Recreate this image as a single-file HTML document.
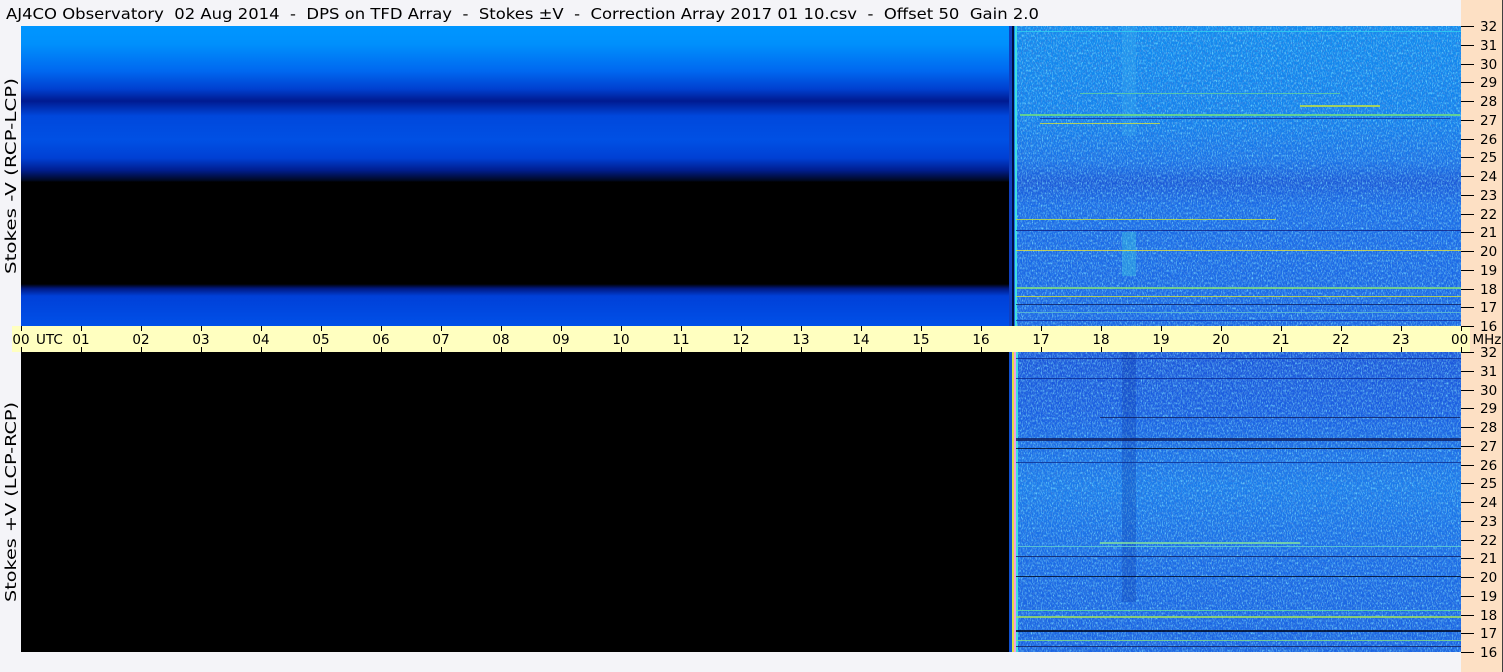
<!DOCTYPE html>
<html><head><meta charset="utf-8"><style>
html,body{margin:0;padding:0;background:#f4f4f8;}
svg{display:block;}
text{font-family:"DejaVu Sans","Liberation Sans",sans-serif;fill:#000;}
</style></head><body>
<svg width="1503" height="672" viewBox="0 0 1503 672" xmlns="http://www.w3.org/2000/svg">
<defs>
<linearGradient id="lt" x1="0" y1="26" x2="0" y2="326" gradientUnits="userSpaceOnUse">
<stop offset="0" stop-color="#0096ff"/>
<stop offset="0.06" stop-color="#0090fc"/>
<stop offset="0.15" stop-color="#0068f0"/>
<stop offset="0.21" stop-color="#0040d0"/>
<stop offset="0.25" stop-color="#001a90"/>
<stop offset="0.30" stop-color="#0048dc"/>
<stop offset="0.38" stop-color="#0050e4"/>
<stop offset="0.44" stop-color="#0040d4"/>
<stop offset="0.48" stop-color="#001e90"/>
<stop offset="0.515" stop-color="#000820"/>
<stop offset="0.52" stop-color="#000"/>
<stop offset="0.86" stop-color="#000"/>
<stop offset="0.875" stop-color="#001880"/>
<stop offset="0.90" stop-color="#0040d8"/>
<stop offset="1" stop-color="#0050e8"/>
</linearGradient>
<linearGradient id="rt" x1="0" y1="26" x2="0" y2="326" gradientUnits="userSpaceOnUse">
<stop offset="0" stop-color="#108cf0"/>
<stop offset="0.3" stop-color="#1282ee"/>
<stop offset="0.45" stop-color="#1a72e8"/>
<stop offset="0.52" stop-color="#1a58d8"/>
<stop offset="0.6" stop-color="#1a6ce8"/>
<stop offset="1" stop-color="#1a66e6"/>
</linearGradient>
<linearGradient id="rb" x1="0" y1="352" x2="0" y2="652" gradientUnits="userSpaceOnUse">
<stop offset="0" stop-color="#1c56da"/>
<stop offset="0.2" stop-color="#1a5ee2"/>
<stop offset="0.45" stop-color="#1a7cec"/>
<stop offset="0.7" stop-color="#1a6ae6"/>
<stop offset="1" stop-color="#1a62e2"/>
</linearGradient>
<filter id="nz" x="0" y="0" width="100%" height="100%">
<feTurbulence type="fractalNoise" baseFrequency="0.8 0.4" numOctaves="2" seed="3"/>
<feColorMatrix values="0 0 0 0 0.2  0 0 0 0 0.75  0 0 0 0 1  0 0 0 2.2 -1.0"/>
</filter>
<filter id="nz2" x="0" y="0" width="100%" height="100%">
<feTurbulence type="fractalNoise" baseFrequency="0.8 0.4" numOctaves="2" seed="9"/>
<feColorMatrix values="0 0 0 0 0.05  0 0 0 0 0.2  0 0 0 0 0.7  0 0 0 2.2 -1.0"/>
</filter>
</defs>
<text x="6" y="19" font-size="15.5" textLength="1033" lengthAdjust="spacingAndGlyphs" xml:space="preserve">AJ4CO Observatory  02 Aug 2014  -  DPS on TFD Array  -  Stokes ±V  -  Correction Array 2017 01 10.csv  -  Offset 50  Gain 2.0</text>
<!-- top plot -->
<rect x="21" y="26" width="988" height="300" fill="url(#lt)"/>
<rect x="1009" y="26" width="452" height="300" fill="url(#rt)"/>
<rect x="1016" y="26" width="445" height="300" filter="url(#nz)"/>
<rect x="1016" y="26" width="445" height="300" filter="url(#nz2)"/>
<rect x="1009" y="26" width="3" height="300" fill="#1040c0"/>
<rect x="1012" y="26" width="2" height="300" fill="#001040"/>
<rect x="1015" y="26" width="2" height="300" fill="#40e0e0"/>
<rect x="1122" y="26" width="14" height="110" fill="#40b0f0" opacity="0.3"/>
<rect x="1122" y="232" width="14" height="44" fill="#40d0e0" opacity="0.35"/>
<g opacity="0.8">
<rect x="1016" y="31" width="445" height="1" fill="#30d0f0"/>
<rect x="1020" y="114" width="440" height="2" fill="#70e080"/>
<rect x="1040" y="118" width="410" height="1" fill="#1030a0"/>
<rect x="1040" y="123" width="120" height="1" fill="#d0e040"/>
<rect x="1080" y="93" width="260" height="1" fill="#60d0a0"/>
<rect x="1300" y="105" width="80" height="2" fill="#c0e040"/>
<rect x="1016" y="219" width="260" height="1" fill="#c0e040"/>
<rect x="1016" y="230" width="445" height="1" fill="#102080"/>
<rect x="1016" y="250" width="445" height="1" fill="#e0e040"/>
<rect x="1016" y="287" width="445" height="2" fill="#80e080"/>
<rect x="1016" y="296" width="445" height="1" fill="#d0e040"/>
<rect x="1016" y="304" width="445" height="1" fill="#102060"/>
<rect x="1016" y="312" width="445" height="1" fill="#60c0d0"/>
<rect x="1016" y="320" width="445" height="1" fill="#1030a0"/>
</g>
<!-- time axis -->
<rect x="12" y="326" width="1458" height="26" fill="#ffffc0"/>
<g stroke="#000" stroke-width="1">
<path d="M21.5 326v5M21.5 347v5M81.5 326v5M81.5 347v5M141.5 326v5M141.5 347v5M201.5 326v5M201.5 347v5M261.5 326v5M261.5 347v5M321.5 326v5M321.5 347v5M381.5 326v5M381.5 347v5M441.5 326v5M441.5 347v5M501.5 326v5M501.5 347v5M561.5 326v5M561.5 347v5M621.5 326v5M621.5 347v5M681.5 326v5M681.5 347v5M741.5 326v5M741.5 347v5M801.5 326v5M801.5 347v5M861.5 326v5M861.5 347v5M921.5 326v5M921.5 347v5M981.5 326v5M981.5 347v5M1041.5 326v5M1041.5 347v5M1101.5 326v5M1101.5 347v5M1161.5 326v5M1161.5 347v5M1221.5 326v5M1221.5 347v5M1281.5 326v5M1281.5 347v5M1341.5 326v5M1341.5 347v5M1401.5 326v5M1401.5 347v5M1461.5 326v5M1461.5 347v5"/>
</g>
<g font-size="13.5" text-anchor="middle">
<text x="21" y="344">00</text><text x="81" y="344">01</text><text x="141" y="344">02</text><text x="201" y="344">03</text><text x="261" y="344">04</text><text x="321" y="344">05</text><text x="381" y="344">06</text><text x="441" y="344">07</text><text x="501" y="344">08</text><text x="561" y="344">09</text><text x="621" y="344">10</text><text x="681" y="344">11</text><text x="741" y="344">12</text><text x="801" y="344">13</text><text x="861" y="344">14</text><text x="921" y="344">15</text><text x="981" y="344">16</text><text x="1041" y="344">17</text><text x="1101" y="344">18</text><text x="1161" y="344">19</text><text x="1221" y="344">20</text><text x="1281" y="344">21</text><text x="1341" y="344">22</text><text x="1401" y="344">23</text>
</g>
<text x="36" y="344" font-size="13.5">UTC</text>
<!-- bottom plot -->
<rect x="21" y="352" width="988" height="300" fill="#000"/>
<rect x="1009" y="352" width="452" height="300" fill="url(#rb)"/>
<rect x="1016" y="352" width="445" height="300" filter="url(#nz)"/>
<rect x="1016" y="352" width="445" height="300" filter="url(#nz2)"/>
<rect x="1009" y="352" width="3" height="300" fill="#1050d0"/>
<rect x="1012" y="352" width="2" height="300" fill="#e0e040"/>
<rect x="1014" y="352" width="2" height="300" fill="#f0a0e0"/>
<rect x="1016" y="352" width="2" height="300" fill="#40e0e0"/>
<rect x="1122" y="352" width="14" height="250" fill="#0830a0" opacity="0.25"/>
<g opacity="0.8">
<rect x="1016" y="358" width="445" height="1" fill="#0a2a90"/>
<rect x="1016" y="378" width="445" height="1" fill="#0a2a90"/>
<rect x="1100" y="417" width="360" height="1" fill="#102060"/>
<rect x="1016" y="438" width="445" height="3" fill="#102060"/>
<rect x="1016" y="448" width="445" height="1" fill="#000820"/>
<rect x="1016" y="462" width="445" height="1" fill="#103090"/>
<rect x="1100" y="542" width="200" height="2" fill="#80e0a0"/>
<rect x="1016" y="546" width="445" height="1" fill="#60d0d0"/>
<rect x="1016" y="556" width="445" height="1" fill="#102060"/>
<rect x="1016" y="576" width="445" height="1" fill="#000820"/>
<rect x="1016" y="610" width="445" height="1" fill="#60e0a0"/>
<rect x="1016" y="616" width="445" height="2" fill="#a0e060"/>
<rect x="1016" y="630" width="445" height="2" fill="#000820"/>
<rect x="1016" y="640" width="445" height="1" fill="#80e080"/>
<rect x="1016" y="646" width="445" height="1" fill="#102060"/>
</g>
<!-- right scale -->
<rect x="1461" y="0" width="42" height="326" fill="#fde0c4"/>
<rect x="1470" y="326" width="33" height="26" fill="#fde0c4"/>
<rect x="1461" y="352" width="42" height="320" fill="#fde0c4"/>
<text x="1451" y="344" font-size="13.5">00 MHz</text>
<g stroke="#000" stroke-width="1">
<path d="M1461 26.5h13M1461 45.5h13M1461 64.5h13M1461 82.5h13M1461 101.5h13M1461 120.5h13M1461 139.5h13M1461 157.5h13M1461 176.5h13M1461 195.5h13M1461 214.5h13M1461 232.5h13M1461 251.5h13M1461 270.5h13M1461 289.5h13M1461 307.5h13M1461 326.5h13"/>
<path d="M1461 352.5h13M1461 371.5h13M1461 390.5h13M1461 408.5h13M1461 427.5h13M1461 446.5h13M1461 465.5h13M1461 483.5h13M1461 502.5h13M1461 521.5h13M1461 540.5h13M1461 558.5h13M1461 577.5h13M1461 596.5h13M1461 615.5h13M1461 633.5h13M1461 652.5h13"/>
</g>
<g font-size="13.5">
<text x="1480" y="31">32</text><text x="1480" y="50">31</text><text x="1480" y="69">30</text><text x="1480" y="87">29</text><text x="1480" y="106">28</text><text x="1480" y="125">27</text><text x="1480" y="144">26</text><text x="1480" y="162">25</text><text x="1480" y="181">24</text><text x="1480" y="200">23</text><text x="1480" y="219">22</text><text x="1480" y="237">21</text><text x="1480" y="256">20</text><text x="1480" y="275">19</text><text x="1480" y="294">18</text><text x="1480" y="312">17</text>
<text x="1480" y="357">32</text><text x="1480" y="376">31</text><text x="1480" y="395">30</text><text x="1480" y="413">29</text><text x="1480" y="432">28</text><text x="1480" y="451">27</text><text x="1480" y="470">26</text><text x="1480" y="488">25</text><text x="1480" y="507">24</text><text x="1480" y="526">23</text><text x="1480" y="545">22</text><text x="1480" y="563">21</text><text x="1480" y="582">20</text><text x="1480" y="601">19</text><text x="1480" y="620">18</text><text x="1480" y="638">17</text><text x="1480" y="657">16</text>
</g>
<text x="1480" y="331" font-size="13.5">16</text>
<rect x="1502" y="0" width="1" height="672" fill="#404040"/>
<!-- y labels -->
<text transform="translate(16,176) rotate(-90)" font-size="15" text-anchor="middle" textLength="196" lengthAdjust="spacingAndGlyphs">Stokes -V (RCP-LCP)</text>
<text transform="translate(16,502) rotate(-90)" font-size="15" text-anchor="middle" textLength="200" lengthAdjust="spacingAndGlyphs">Stokes +V (LCP-RCP)</text>
</svg>
</body></html>
